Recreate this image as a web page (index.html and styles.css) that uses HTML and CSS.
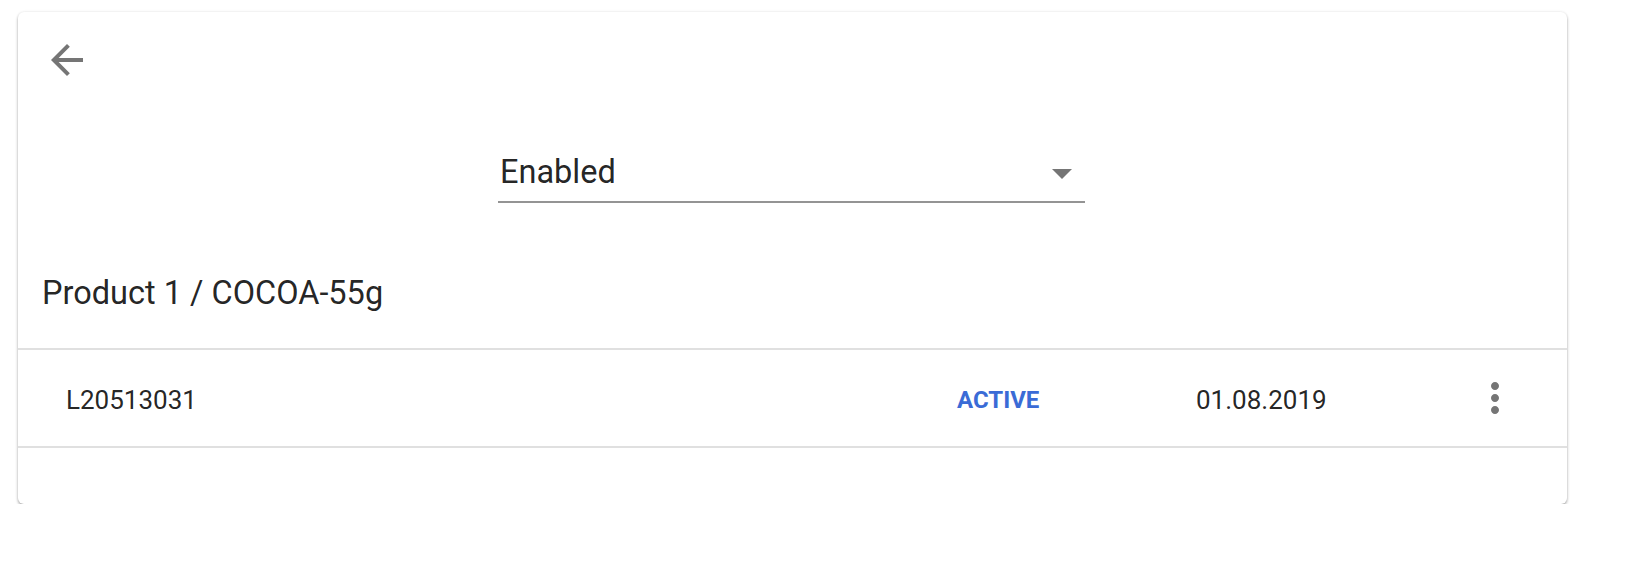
FILE: index.html
```html
<!DOCTYPE html>
<html>
<head>
<meta charset="utf-8">
<title>Product</title>
<link rel="stylesheet" href="styles.css">
</head>
<body>
<div class="page">
  <div class="card">
    <div class="toolbar">
      <button class="icon-btn" aria-label="Back">
        <svg viewBox="0 0 24 24" width="48" height="48"><path d="M20 11H7.83l5.59-5.59L12 4l-8 8 8 8 1.41-1.41L7.83 13H20v-2z"/></svg>
      </button>
    </div>
    <div class="select-wrap">
      <div class="select">
        <span class="select-value">Enabled</span>
        <svg class="select-arrow" viewBox="0 0 24 24" width="48" height="48"><path d="M7 10l5 5 5-5z"/></svg>
      </div>
    </div>
    <div class="header">Product 1 / COCOA-55g</div>
    <div class="row">
      <div class="cell">L20513031</div>
      <div class="cell status">ACTIVE</div>
      <div class="cell">01.08.2019</div>
      <div class="cell menu">
        <svg viewBox="0 0 24 24" width="48" height="48"><path d="M12 8c1.1 0 2-.9 2-2s-.9-2-2-2-2 .9-2 2 .9 2 2 2zm0 2c-1.1 0-2 .9-2 2s.9 2 2 2 2-.9 2-2-.9-2-2-2zm0 6c-1.1 0-2 .9-2 2s.9 2 2 2 2-.9 2-2-.9-2-2-2z"/></svg>
      </div>
    </div>
    <div class="footer"></div>
  </div>
</div>
</body>
</html>
```

FILE: styles.css
```css
html, body {
  margin: 0;
  padding: 0;
  background: #ffffff;
}
body {
  font-family: Roboto, "Liberation Sans", Arial, sans-serif;
  color: rgba(0, 0, 0, 0.87);
}
.page {
  padding: 12px 0 0 18px;
}
.card {
  width: 1549px;
  background: #fff;
  border-radius: 6px;
  box-shadow: 0 2px 3px rgba(0, 0, 0, 0.3), 0 0 3px rgba(0, 0, 0, 0.1);
  box-sizing: border-box;
}
.toolbar {
  padding: 24px 0 0 25px;
  height: 48px;
}
.icon-btn {
  width: 48px;
  height: 48px;
  padding: 0;
  border: 0;
  background: none;
  display: block;
}
.icon-btn svg {
  display: block;
  fill: #757575;
}
.select-wrap {
  display: flex;
  justify-content: center;
  padding-top: 61px;
}
.select {
  width: 587px;
  height: 56px;
  border-bottom: 2px solid #949494;
  display: flex;
  align-items: center;
  justify-content: space-between;
  margin-left: -2px;
}
.select-value {
  font-size: 32.5px;
  line-height: 36px;
  padding-left: 2px;
  margin-top: -2px;
}
.select-arrow {
  fill: #757575;
  display: block;
  margin-right: -1px;
}
.header {
  font-size: 32.5px;
  line-height: 40px;
  padding: 70px 0 35px 24px;
  border-bottom: 2px solid #e0e0e0;
}
.row {
  display: grid;
  grid-template-columns: 891px 239px 275px 48px;
  align-items: center;
  height: 96px;
  padding: 0 48px;
  border-bottom: 2px solid #e0e0e0;
  font-size: 26px;
}
.cell {
  line-height: 30px;
  white-space: nowrap;
  padding-top: 3px;
}
.status {
  color: #3a6bd6;
  font-weight: 700;
  font-size: 24px;
}
.menu {
  padding-top: 0;
}
.menu svg {
  display: block;
  fill: #757575;
}
.footer {
  height: 56px;
}
```
